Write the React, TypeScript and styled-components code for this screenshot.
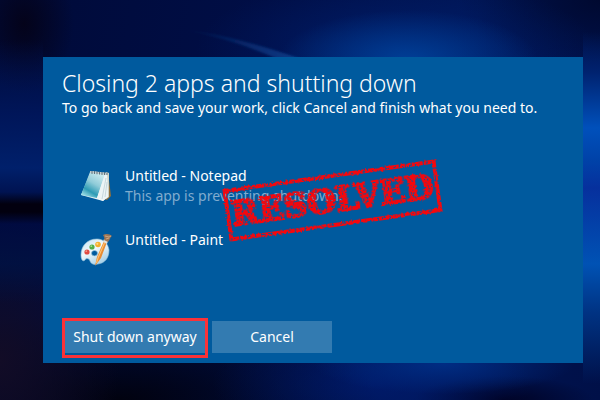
import React from "react";
import styled, { createGlobalStyle } from "styled-components";

const GlobalStyle = createGlobalStyle`
  * { box-sizing: border-box; }
  body {
    margin: 0;
    font-family: "Noto Sans", "Open Sans", sans-serif;
    color: #fff;
    background: #00093a;
  }
`;

const Desktop = styled.main`
  position: relative;
  display: flex;
  min-height: 100vh;
  padding: 57px 17px 37px 43px;
  background:
    linear-gradient(180deg, transparent 8%, #00226f 18%, #0050bb 32%, #0042a8 40%, #06309d 47%, #0052b4 66%, #003383 78%, transparent 96%) right / 17px 100% no-repeat,
    linear-gradient(180deg, transparent 10%, rgba(0, 24, 96, 0.8) 28%, rgba(0, 34, 112, 0.9) 42%, rgba(0, 20, 84, 0.9) 48%, #02000f 51%, #02000f 53%, rgba(0, 11, 66, 0.8) 56%, rgba(0, 18, 68, 0.8) 66%, transparent 76%) left / 43px 100% no-repeat,
    radial-gradient(ellipse 130px 50px at 68% 15%, rgba(0, 74, 166, 0.75), transparent),
    radial-gradient(ellipse 200px 70px at 66% 12%, rgba(0, 40, 130, 0.5), transparent),
    radial-gradient(ellipse 140px 70px at 100% 0%, rgba(0, 8, 45, 0.9), transparent),
    radial-gradient(ellipse 130px 30px at 74% 91%, rgba(0, 50, 140, 0.8), transparent),
    radial-gradient(ellipse 160px 60px at 62% 96%, rgba(0, 30, 120, 0.6), transparent),
    radial-gradient(ellipse 90px 24px at 84% 100%, rgba(0, 0, 30, 0.9), transparent),
    radial-gradient(ellipse 120px 150px at 0% 90%, #120c26, transparent),
    radial-gradient(ellipse 260px 90px at 20% 100%, #01020f, transparent),
    radial-gradient(ellipse 50px 70px at 4% 6%, #04031a, transparent),
    linear-gradient(100deg, #000a38 0%, #000e46 40%, #001555 72%, #001048 100%);
`;

const LightStreak = styled.svg`
  position: absolute;
  top: 20px;
  left: 170px;
  width: 160px;
  height: 45px;
`;

const Dialog = styled.section`
  flex: 1;
  position: relative;
  display: flex;
  flex-direction: column;
  padding: 10px 20px 5px 19px;
  background: #005a9e;
`;

const Title = styled.h1`
  margin: 0;
  font-size: 23px;
  line-height: 32px;
  font-weight: 300;
`;

const Message = styled.p`
  margin: 0;
  font-size: 14px;
  line-height: 18px;
`;

const AppList = styled.ul`
  display: grid;
  gap: 24px;
  margin: 49px 0 0;
  padding: 0 0 0 18px;
  list-style: none;
`;

const AppRow = styled.li`
  display: flex;
  gap: 9px;
  min-height: 40px;
`;

const AppIcon = styled.svg`
  flex: none;
  width: 36px;
  height: 36px;
`;

const AppName = styled.div`
  font-size: 14px;
  line-height: 20px;
`;

const AppStatus = styled.div`
  font-size: 14px;
  line-height: 20px;
  color: #80acce;
`;

const Actions = styled.div`
  display: flex;
  align-items: flex-start;
  gap: 4px;
  margin-top: auto;
`;

const ActionFrame = styled.div<{ $marked?: boolean }>`
  padding-bottom: 2px;
  border: 3px solid ${(p) => (p.$marked ? "#fb3238" : "transparent")};
  border-width: ${(p) => (p.$marked ? "3px" : "3px 0")};
`;

const ActionButton = styled.button<{ $wide?: boolean }>`
  display: block;
  width: ${(p) => (p.$wide ? "140px" : "120px")};
  height: 32px;
  padding: 0;
  border: 0;
  font: 14px/32px "Noto Sans", "Open Sans", sans-serif;
  color: #fff;
  background: #337bb1;
  cursor: pointer;
`;

const Stamp = styled.div`
  position: absolute;
  top: 117px;
  left: 182px;
  width: 215px;
  height: 53px;
  border: 4px solid #f6070c;
  font: bold 33px/45px "DejaVu Serif", serif;
  text-align: center;
  color: #f6070c;
  -webkit-text-stroke: 2px #f6070c;
  transform: rotate(-8deg);
  filter: url(#worn-ink);
`;

const FilterDefs = styled.svg`
  position: absolute;
  width: 0;
  height: 0;
`;

function WornInk() {
  return (
    <FilterDefs aria-hidden="true">
      <filter id="worn-ink" x="-5%" y="-10%" width="110%" height="120%" colorInterpolationFilters="sRGB">
        <feTurbulence type="fractalNoise" baseFrequency="0.5" numOctaves="2" seed="7" result="noise" />
        <feDisplacementMap in="SourceGraphic" in2="noise" scale="3" xChannelSelector="R" yChannelSelector="G" result="rough" />
        <feColorMatrix in="noise" type="matrix" values="0 0 0 0 0  0 0 0 0 0  0 0 0 0 0  0 0 0 12 -4.2" result="holes" />
        <feComposite in="rough" in2="holes" operator="in" />
      </filter>
    </FilterDefs>
  );
}

function NotepadIcon() {
  return (
    <AppIcon viewBox="0 0 36 36" aria-hidden="true">
      <defs>
        <linearGradient id="np-cover" x1="0.8" y1="0" x2="0.25" y2="1">
          <stop offset="0" stopColor="#d3eef2" />
          <stop offset="0.45" stopColor="#8fcbd8" />
          <stop offset="0.75" stopColor="#2d9bb5" />
          <stop offset="1" stopColor="#a5e2e9" />
        </linearGradient>
        <linearGradient id="np-page" x1="0" y1="0" x2="1" y2="1">
          <stop offset="0" stopColor="#c5dfe5" />
          <stop offset="1" stopColor="#f7fafa" />
        </linearGradient>
      </defs>
      <path d="M28 6 31 30 27 34 24 33Z" fill="#92713d" />
      <path d="M26 6 29 7 29 31 26 33Z" fill="#cfd2c5" />
      <path d="M11 5 27 7 28 31 23 35 1 29Z" fill="url(#np-page)" />
      <path d="M10 6 25 8 17 32 1 29Z" fill="url(#np-cover)" />
      <path d="M25 8 17 32 23 35 28 30 27 8Z" fill="#edf4f5" />
      <path d="M26 12 22 33M27 16 25 31" stroke="#b6cbd2" strokeWidth="0.7" />
      <path d="M10 5 28 7 27 9 10 7Z" fill="#c3cdd0" />
      <path d="M12 5V8M14.500 5V8M17 5.300V8.300M19.500 5.500V8.500M22 6V9M24.500 6V9M27 6.500V9" stroke="#546b76" strokeWidth="0.9" />
    </AppIcon>
  );
}

function PaintIcon() {
  return (
    <AppIcon viewBox="0 0 36 36" aria-hidden="true">
      <defs>
        <linearGradient id="pt-palette" x1="0" y1="0" x2="0.6" y2="1">
          <stop offset="0" stopColor="#c3e1f1" />
          <stop offset="0.5" stopColor="#f0f8fb" />
          <stop offset="1" stopColor="#a9d1e8" />
        </linearGradient>
      </defs>
      <path
        fillRule="evenodd"
        d="M17 9C7 9 1 16 1 25C1 30 3 32 5 30C6 28 9 28 10 31C11 34 14 35 18 34C25 33 29 28 29 20C28 13 23 9 17 9ZM14.500 20.500a3 2.700 0 1 1 0 5.400a3 2.700 0 1 1 0-5.400Z"
        fill="url(#pt-palette)"
        stroke="#9ac6de"
        strokeWidth="0.6"
      />
      <circle cx="7" cy="22" r="2.600" fill="#e14b42" />
      <circle cx="6.300" cy="21.200" r="0.9" fill="#f29388" />
      <circle cx="12" cy="17" r="2.600" fill="#50ad48" />
      <circle cx="11.300" cy="16.200" r="0.9" fill="#a5db88" />
      <circle cx="18" cy="14.500" r="2.800" fill="#f5ae2c" />
      <circle cx="17.300" cy="13.800" r="1.100" fill="#ffda77" />
      <path d="M27 12 21 28 15 36 17 27 24 11Z" fill="#e88b32" />
      <path d="M24.500 13 18 28 16.500 33" stroke="#ffc373" strokeWidth="1.100" fill="none" />
      <path d="M24 9 28 11 27 14 23 12Z" fill="#e3e2d9" />
      <path d="M23 5C26 3 30 4 32 6C30 7 30 10 28 12L24 10C25 8 24 7 23 5Z" fill="#9e7555" />
      <path d="M25 6 29 7 31 6M26 9 29 8" stroke="#d1ac84" strokeWidth="0.9" fill="none" />
    </AppIcon>
  );
}

const apps = [
  { name: "Untitled - Notepad", status: "This app is preventing shutdown.", Icon: NotepadIcon },
  { name: "Untitled - Paint", status: "", Icon: PaintIcon },
];

export default function App() {
  return (
    <>
      <GlobalStyle />
      <Desktop>
        <LightStreak viewBox="0 0 160 45" aria-hidden="true">
          <defs>
            <linearGradient id="streak">
              <stop offset="0" stopColor="#1450a0" stopOpacity="0" />
              <stop offset="1" stopColor="#1450a0" stopOpacity="0.7" />
            </linearGradient>
            <filter id="streak-soft"><feGaussianBlur stdDeviation="1.2" /></filter>
          </defs>
          <path d="M14 10Q60 14 140 42L110 40Q60 18 14 10Z" fill="url(#streak)" filter="url(#streak-soft)" />
        </LightStreak>
        <Dialog aria-labelledby="dialog-title">
          <Title id="dialog-title">Closing 2 apps and shutting down</Title>
          <Message>To go back and save your work, click Cancel and finish what you need to.</Message>
          <AppList>
            {apps.map(({ name, status, Icon }) => (
              <AppRow key={name}>
                <Icon />
                <div>
                  <AppName>{name}</AppName>
                  {status && <AppStatus>{status}</AppStatus>}
                </div>
              </AppRow>
            ))}
          </AppList>
          <Actions>
            <ActionFrame $marked>
              <ActionButton type="button" $wide>Shut down anyway</ActionButton>
            </ActionFrame>
            <ActionFrame>
              <ActionButton type="button">Cancel</ActionButton>
            </ActionFrame>
          </Actions>
          <WornInk />
          <Stamp>RESOLVED</Stamp>
        </Dialog>
      </Desktop>
    </>
  );
}
